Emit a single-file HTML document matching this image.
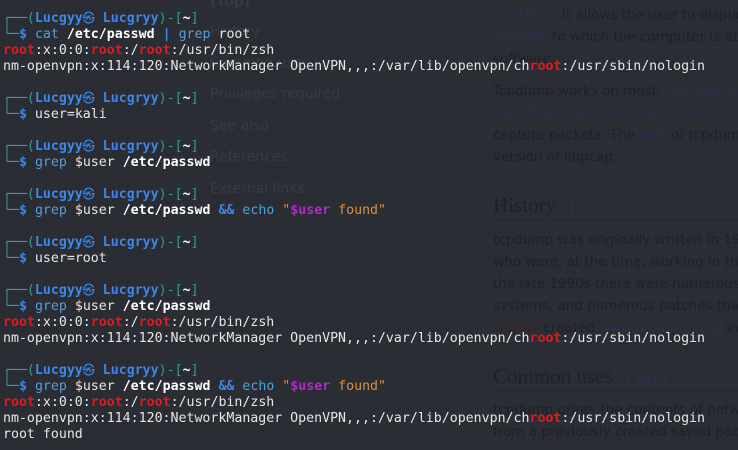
<!DOCTYPE html>
<html><head><meta charset="utf-8"><style>
html,body{margin:0;padding:0;width:738px;height:450px;overflow:hidden;background:#2b2d35;}
#w{position:relative;width:738px;height:450px;overflow:hidden}
.bg{position:absolute;font-family:"DejaVu Sans","Liberation Sans",sans-serif;font-size:14px;color:#383a42;white-space:nowrap}
.p{position:absolute;left:493px;font-family:"DejaVu Sans","Liberation Sans",sans-serif;font-size:13.5px;color:#1f2128;white-space:nowrap;line-height:22px}
.p a{color:#283249}
.h{position:absolute;left:493px;font-family:"Liberation Serif",serif;font-size:21px;color:#1f2128;white-space:nowrap}
.h span{font-family:"DejaVu Sans",sans-serif;font-size:12px;color:#283249;margin-left:14px}
.hr{position:absolute;left:493px;width:245px;height:1px;background:#24262d}
.t{position:absolute;left:3px;top:11px;font-family:"DejaVu Sans Mono","Liberation Mono",monospace;font-size:13.25px;line-height:16px;color:#e6e6e6}
.t div{height:16px;white-space:pre;overflow:visible}
.g{color:#2f9e94}.u{color:#3d86ea;font-weight:bold}.c{color:#4ea1d9}.w{color:#fff;font-weight:bold}
.r{color:#e3181e;font-weight:bold}.o{color:#d6903f}.v{color:#a72fc2;font-weight:bold}.s{color:#3d86ea;font-weight:bold}
.k{font-weight:normal;font-size:12px;line-height:1px}
</style></head><body><div id="w">
<div class="bg" style="left:210px;top:-6px;font-weight:bold">(Top)</div>
<div class="bg" style="left:210px;top:24px">History</div>
<div class="bg" style="left:210px;top:55px">Common uses</div>
<div class="bg" style="left:210px;top:86px">Privileges required</div>
<div class="bg" style="left:210px;top:118px">See also</div>
<div class="bg" style="left:210px;top:149px">References</div>
<div class="bg" style="left:210px;top:181px">External links</div>
<div class="p" style="top:4px"><a>interface</a>. It allows the user to display<br><a>network</a> to which the computer is attached<br>software.</div>
<div class="p" style="top:80px">Tcpdump works on most <a>Unix-like operating</a><br><a>OpenBSD, OpenWrt, macOS, HP-UX 11i</a><br>capture packets. The <a>port</a> of tcpdump<br>version of libpcap.</div>
<div class="h" style="top:193px">History<span>[ edit ]</span></div>
<div class="hr" style="top:219px"></div>
<div class="p" style="top:229px">tcpdump was originally written in 1988<br>who were, at the time, working in the<br>the late 1990s there were numerous v<br>systems, and numerous patches that<br><a style="color:#3a2226">Fenner</a> created <a>www.tcpdump.org</a> in</div>
<div class="h" style="top:364px">Common uses<span>[ edit ]</span></div>
<div class="hr" style="top:390px"></div>
<div class="p" style="top:399px">tcpdump prints the contents of network<br>from a previously created saved packet</div>
<div class="t">
<div><span class="g">┌──(</span><span class="u">Lucgyy<span class="k">㉿</span> Lucgryy</span><span class="g">)-[</span><span class="w">~</span><span class="g">]</span></div>
<div><span class="g">└─</span><span class="u">$</span> <span class="c">cat</span> <span class="w">/etc/passwd</span> <span class="s">|</span> <span class="c">grep</span> root</div>
<div><span class="r">root</span>:x:0:0:<span class="r">root</span>:/<span class="r">root</span>:/usr/bin/zsh</div>
<div>nm-openvpn:x:114:120:NetworkManager OpenVPN,,,:/var/lib/openvpn/ch<span class="r">root</span>:/usr/sbin/nologin</div>
<div></div>
<div><span class="g">┌──(</span><span class="u">Lucgyy<span class="k">㉿</span> Lucgryy</span><span class="g">)-[</span><span class="w">~</span><span class="g">]</span></div>
<div><span class="g">└─</span><span class="u">$</span> user=kali</div>
<div></div>
<div><span class="g">┌──(</span><span class="u">Lucgyy<span class="k">㉿</span> Lucgryy</span><span class="g">)-[</span><span class="w">~</span><span class="g">]</span></div>
<div><span class="g">└─</span><span class="u">$</span> <span class="c">grep</span> $user <span class="w">/etc/passwd</span></div>
<div></div>
<div><span class="g">┌──(</span><span class="u">Lucgyy<span class="k">㉿</span> Lucgryy</span><span class="g">)-[</span><span class="w">~</span><span class="g">]</span></div>
<div><span class="g">└─</span><span class="u">$</span> <span class="c">grep</span> $user <span class="w">/etc/passwd</span> <span class="s">&amp;&amp;</span> <span class="c">echo</span> <span class="o">"</span><span class="v">$user</span><span class="o"> found"</span></div>
<div></div>
<div><span class="g">┌──(</span><span class="u">Lucgyy<span class="k">㉿</span> Lucgryy</span><span class="g">)-[</span><span class="w">~</span><span class="g">]</span></div>
<div><span class="g">└─</span><span class="u">$</span> user=root</div>
<div></div>
<div><span class="g">┌──(</span><span class="u">Lucgyy<span class="k">㉿</span> Lucgryy</span><span class="g">)-[</span><span class="w">~</span><span class="g">]</span></div>
<div><span class="g">└─</span><span class="u">$</span> <span class="c">grep</span> $user <span class="w">/etc/passwd</span></div>
<div><span class="r">root</span>:x:0:0:<span class="r">root</span>:/<span class="r">root</span>:/usr/bin/zsh</div>
<div>nm-openvpn:x:114:120:NetworkManager OpenVPN,,,:/var/lib/openvpn/ch<span class="r">root</span>:/usr/sbin/nologin</div>
<div></div>
<div><span class="g">┌──(</span><span class="u">Lucgyy<span class="k">㉿</span> Lucgryy</span><span class="g">)-[</span><span class="w">~</span><span class="g">]</span></div>
<div><span class="g">└─</span><span class="u">$</span> <span class="c">grep</span> $user <span class="w">/etc/passwd</span> <span class="s">&amp;&amp;</span> <span class="c">echo</span> <span class="o">"</span><span class="v">$user</span><span class="o"> found"</span></div>
<div><span class="r">root</span>:x:0:0:<span class="r">root</span>:/<span class="r">root</span>:/usr/bin/zsh</div>
<div>nm-openvpn:x:114:120:NetworkManager OpenVPN,,,:/var/lib/openvpn/ch<span class="r">root</span>:/usr/sbin/nologin</div>
<div>root found</div>
</div>
</div></body></html>
